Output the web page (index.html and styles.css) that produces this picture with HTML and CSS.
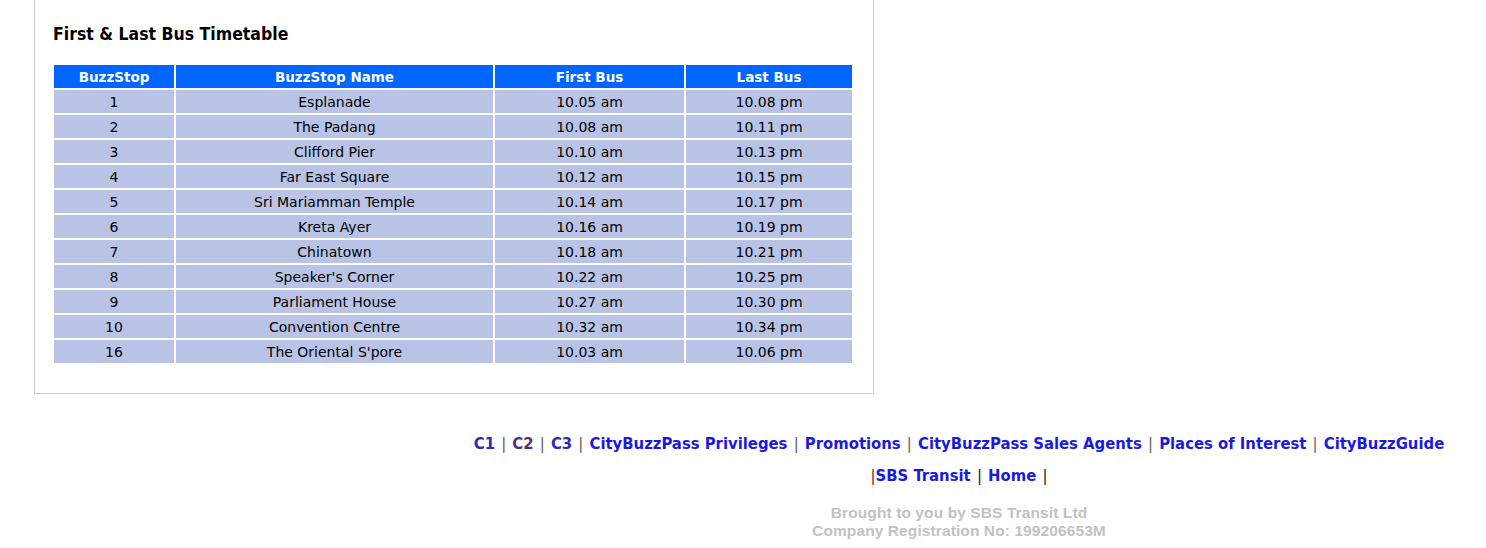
FILE: index.html
```html
<!DOCTYPE html>
<html>
<head>
<meta charset="utf-8">
<title>First &amp; Last Bus Timetable</title>
<link rel="stylesheet" href="styles.css">
</head>
<body>
<div class="box">
  <h2 class="title">First &amp; Last Bus Timetable</h2>
  <table class="tt">
    <thead>
      <tr><th class="c1">BuzzStop</th><th class="c2">BuzzStop Name</th><th class="c3">First Bus</th><th class="c4">Last Bus</th></tr>
    </thead>
    <tbody>
      <tr><td>1</td><td>Esplanade</td><td>10.05 am</td><td>10.08 pm</td></tr>
      <tr><td>2</td><td>The Padang</td><td>10.08 am</td><td>10.11 pm</td></tr>
      <tr><td>3</td><td>Clifford Pier</td><td>10.10 am</td><td>10.13 pm</td></tr>
      <tr><td>4</td><td>Far East Square</td><td>10.12 am</td><td>10.15 pm</td></tr>
      <tr><td>5</td><td>Sri Mariamman Temple</td><td>10.14 am</td><td>10.17 pm</td></tr>
      <tr><td>6</td><td>Kreta Ayer</td><td>10.16 am</td><td>10.19 pm</td></tr>
      <tr><td>7</td><td>Chinatown</td><td>10.18 am</td><td>10.21 pm</td></tr>
      <tr><td>8</td><td>Speaker's Corner</td><td>10.22 am</td><td>10.25 pm</td></tr>
      <tr><td>9</td><td>Parliament House</td><td>10.27 am</td><td>10.30 pm</td></tr>
      <tr><td>10</td><td>Convention Centre</td><td>10.32 am</td><td>10.34 pm</td></tr>
      <tr><td>16</td><td>The Oriental S'pore</td><td>10.03 am</td><td>10.06 pm</td></tr>
    </tbody>
  </table>
</div>
<div class="footer">
  <p class="nav">
    <a href="#" class="dark">C1</a> <span class="sep">|</span> <a href="#" class="visited">C2</a> <span class="sep">|</span> <a href="#" class="dark">C3</a> <span class="sep">|</span> <a href="#">CityBuzzPass Privileges</a> <span class="sep">|</span> <a href="#">Promotions</a> <span class="sep">|</span> <a href="#">CityBuzzPass Sales Agents</a> <span class="sep">|</span> <a href="#">Places of Interest</a> <span class="sep">|</span> <a href="#">CityBuzzGuide</a>
  </p>
  <p class="nav2"><span class="sep2 red">|</span><a href="#">SBS Transit</a> <span class="sep2">|</span> <a href="#">Home</a> <span class="sep2">|</span></p>
  <p class="credit">Brought to you by SBS Transit Ltd<br>Company Registration No: 199206653M</p>
</div>
</body>
</html>
```

FILE: styles.css
```css
html, body {
  margin: 0;
  padding: 0;
  background: #fff;
}
body {
  font-family: "DejaVu Sans Condensed", "DejaVu Sans", sans-serif;
  color: #000;
}
.box {
  width: 840px;
  margin-left: 34px;
  margin-top: -1px;
  border: 1px solid #cfcfcf;
  padding: 0 0 28px 17px;
  box-sizing: border-box;
}
.title {
  margin: 0;
  padding: 23px 0 0 1px;
  height: 40px;
  box-sizing: content-box;
  font-size: 17.5px;
  font-weight: bold;
  line-height: 22px;
}
.tt {
  border-collapse: separate;
  border-spacing: 2px;
  font-family: "DejaVu Sans", sans-serif;
  font-size: 14px;
}
.tt th {
  background: #0066ff;
  color: #fff;
  font-weight: bold;
  font-size: 13.5px;
  height: 23px;
  padding: 0;
  text-align: center;
}
.tt td {
  background: #b8c3e6;
  height: 23px;
  padding: 0;
  text-align: center;
}
.c1 { width: 120px; }
.c2 { width: 317px; }
.c3 { width: 189px; }
.c4 { width: 166px; }
.footer {
  margin-left: 432px;
  text-align: center;
  padding-top: 34px;
}
.nav, .nav2 {
  margin: 0;
  font-size: 16.5px;
  font-weight: bold;
  line-height: 32px;
  color: #555;
  word-spacing: 1px;
}
.nav a, .nav2 a {
  color: #1a1adf;
  text-decoration: none;
  word-spacing: 0;
}
.nav a.dark { color: #2b2bb5; }
.nav a.visited { color: #5c2a80; }
.sep { color: #5a5a5a; font-weight: normal; }
.sep2 { color: #111; font-weight: normal; }
.sep2.red { color: #8a1010; }
.credit {
  margin: 12px 0 0;
  font-family: "Liberation Sans", sans-serif;
  font-weight: bold;
  font-size: 15.5px;
  line-height: 18px;
  letter-spacing: 0.1px;
  color: #c2c2c2;
}
```
